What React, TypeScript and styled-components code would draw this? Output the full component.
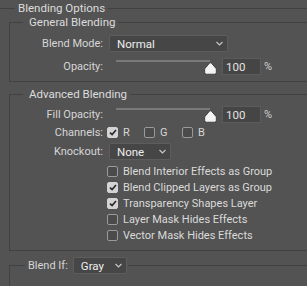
import React from 'react';
import styled, { createGlobalStyle } from 'styled-components';

const GlobalStyle = createGlobalStyle`
  html, body {
    margin: 0;
    padding: 0;
    background: #535353;
  }
  body {
    overflow: hidden;
    font-family: Roboto, "Liberation Sans", sans-serif;
    font-size: 11px;
    color: #d6d6d6;
  }
`;

const LINE = '#414141';

const Panel = styled.div`
  width: 307px;
  height: 286px;
  overflow: hidden;
  background: #535353;
`;

const Outer = styled.fieldset`
  margin: 1px 0 0;
  padding: 0 0 0 9px;
  border: none;
  border-top: 1px solid ${LINE};
  min-width: 0;
`;

const OuterLegend = styled.legend`
  margin-left: 6px;
  padding: 0 3px;
  line-height: 14px;
  font-size: 11.5px;
  color: #dcdcdc;
`;

const Group = styled.fieldset<{ $top?: number; $padTop: number; $padBottom: number }>`
  margin: ${(p) => p.$top ?? 0}px -40px 0 0;
  padding: ${(p) => p.$padTop}px 0 ${(p) => p.$padBottom}px 0;
  border: 1px solid ${LINE};
  min-width: 0;
`;

const GroupLegend = styled.legend`
  margin-left: 13px;
  padding: 0 3px 0 6px;
  line-height: 14px;
  font-size: 11.5px;
  color: #dcdcdc;
`;

const BlendIfLegend = styled.legend`
  margin-left: 15px;
  padding: 0 1px 0 3px;
  display: flex;
  align-items: center;
  gap: 5px;
`;

const Row = styled.div<{ $h: number; $mb?: number }>`
  display: flex;
  align-items: center;
  height: ${(p) => p.$h}px;
  margin-bottom: ${(p) => p.$mb ?? 0}px;
`;

const Label = styled.span`
  width: 93px;
  text-align: right;
  flex-shrink: 0;
`;

const Select = styled.div<{ $w: number; $ml?: number }>`
  box-sizing: border-box;
  width: ${(p) => p.$w}px;
  height: 17px;
  margin-left: ${(p) => p.$ml ?? 6}px;
  padding: 0 4px 0 7px;
  display: flex;
  align-items: center;
  justify-content: space-between;
  background: #464646;
  border: 1px solid #5d5d5d;
  border-radius: 2px;
  color: #eeeeee;
  font-size: 11.5px;
`;

const Chevron = () => (
  <svg width="7" height="5" viewBox="0 0 7 5">
    <path d="M0.5 1 L3.5 4 L6.5 1" fill="none" stroke="#c8c8c8" strokeWidth="1.1" />
  </svg>
);

const SliderWrap = styled.div`
  position: relative;
  width: 100px;
  height: 17px;
  margin-left: 13px;
`;

const Track = styled.div`
  position: absolute;
  left: 0;
  top: 2px;
  width: 94px;
  height: 2px;
  background: #7a7a7a;
`;

const Thumb = styled.svg`
  position: absolute;
  left: 88px;
  top: 4px;
`;

const NumBox = styled.div`
  box-sizing: border-box;
  width: 39px;
  height: 17px;
  margin-left: 6px;
  padding-left: 3px;
  display: flex;
  align-items: center;
  background: #454545;
  border: 1px solid #5b5b5b;
  color: #e2e2e2;
  font-size: 11.5px;
`;

const Percent = styled.span`
  margin-left: 3px;
  color: #d0d0d0;
`;

const Slider = ({ value }: { value: number }) => (
  <>
    <SliderWrap>
      <Track />
      <Thumb width="13" height="13" viewBox="0 0 13 13">
        <path
          d="M6.5 0.8 Q7.2 0.8 7.8 1.6 L12 6.4 Q12.3 6.9 12.3 7.6 L12.3 10.4 Q12.3 12.2 10.6 12.2 L2.4 12.2 Q0.7 12.2 0.7 10.4 L0.7 7.6 Q0.7 6.9 1 6.4 L5.2 1.6 Q5.8 0.8 6.5 0.8 Z"
          fill="#f4f4f4"
          stroke="#2e2e2e"
          strokeWidth="0.8"
        />
      </Thumb>
    </SliderWrap>
    <NumBox>{value}</NumBox>
    <Percent>%</Percent>
  </>
);

const Box = styled.span<{ $on?: boolean }>`
  box-sizing: border-box;
  width: 11px;
  height: 11px;
  flex-shrink: 0;
  display: inline-flex;
  align-items: center;
  justify-content: center;
  border-radius: 2px;
  background: ${(p) => (p.$on ? '#d4d4d4' : '#4b4b4b')};
  border: 1px solid ${(p) => (p.$on ? '#d4d4d4' : '#9a9a9a')};
`;

const Check = ({ on }: { on?: boolean }) => (
  <Box $on={on}>
    {on && (
      <svg width="8" height="7" viewBox="0 0 8 7">
        <path d="M1 3.6 L3.1 5.6 L7 1" fill="none" stroke="#2b2b2b" strokeWidth="1.7" />
      </svg>
    )}
  </Box>
);

const Channels = styled.div`
  display: flex;
  margin-left: 4px;
`;

const Channel = styled.span<{ $w: number }>`
  width: ${(p) => p.$w}px;
  display: flex;
  align-items: center;
  gap: 5px;
`;

const CheckList = styled.div`
  margin-top: 3px;
  padding-left: 97px;
`;

const CheckRow = styled.label`
  height: 16px;
  display: flex;
  align-items: center;
  gap: 5px;
  color: #dadada;
`;

const BlendIfBody = styled.div`
  height: 30px;
`;

const options: [string, boolean][] = [
  ['Blend Interior Effects as Group', false],
  ['Blend Clipped Layers as Group', true],
  ['Transparency Shapes Layer', true],
  ['Layer Mask Hides Effects', false],
  ['Vector Mask Hides Effects', false],
];

export default function App() {
  return (
    <Panel>
      <GlobalStyle />
      <Outer>
        <OuterLegend>Blending Options</OuterLegend>

        <Group $padTop={6} $padBottom={6}>
          <GroupLegend>General Blending</GroupLegend>
          <Row $h={17} $mb={6}>
            <Label>Blend Mode:</Label>
            <Select $w={119}>
              Normal
              <Chevron />
            </Select>
          </Row>
          <Row $h={17}>
            <Label>Opacity:</Label>
            <Slider value={100} />
          </Row>
        </Group>

        <Group $top={5} $padTop={5} $padBottom={7}>
          <GroupLegend>Advanced Blending</GroupLegend>
          <Row $h={17} $mb={1}>
            <Label>Fill Opacity:</Label>
            <Slider value={100} />
          </Row>
          <Row $h={16} $mb={3}>
            <Label>Channels:</Label>
            <Channels>
              <Channel $w={37}>
                <Check on />R
              </Channel>
              <Channel $w={38}>
                <Check />G
              </Channel>
              <Channel $w={30}>
                <Check />B
              </Channel>
            </Channels>
          </Row>
          <Row $h={17}>
            <Label>Knockout:</Label>
            <Select $w={62}>
              None
              <Chevron />
            </Select>
          </Row>
          <CheckList>
            {options.map(([text, on]) => (
              <CheckRow key={text}>
                <Check on={on} />
                {text}
              </CheckRow>
            ))}
          </CheckList>
        </Group>

        <Group $top={6} $padTop={0} $padBottom={0}>
          <BlendIfLegend>
            Blend If:
            <Select $w={54} $ml={0}>
              Gray
              <Chevron />
            </Select>
          </BlendIfLegend>
          <BlendIfBody />
        </Group>
      </Outer>
    </Panel>
  );
}
